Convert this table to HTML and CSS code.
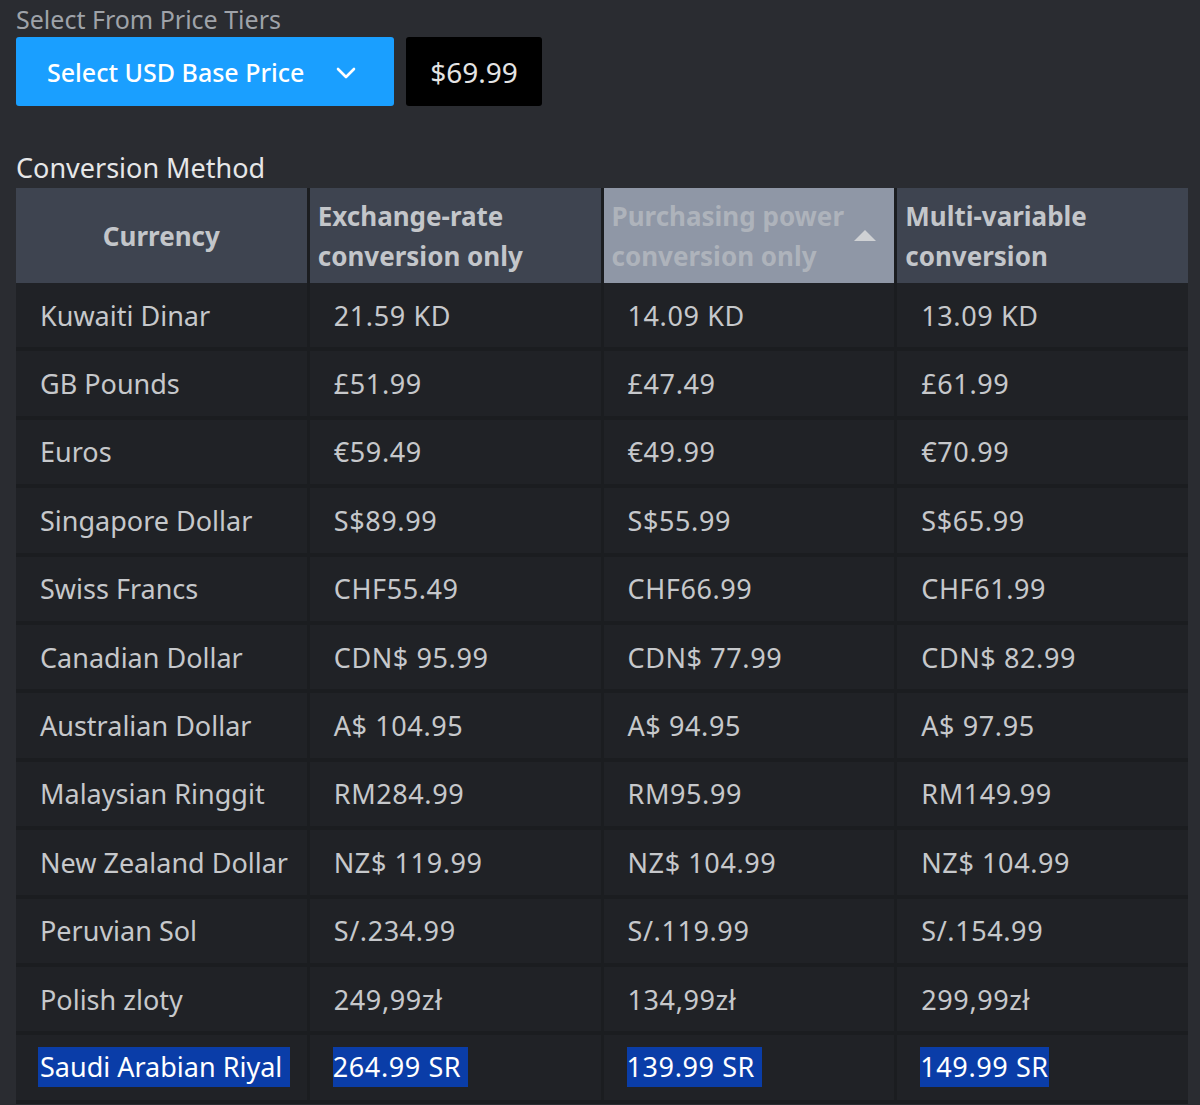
FILE: index.html
```html
<!DOCTYPE html>
<html lang="en">
<head>
<meta charset="utf-8">
<title>Price Tiers</title>
<link rel="stylesheet" href="styles.css">
</head>
<body>
<div class="page">
  <div class="tier-label">Select From Price Tiers</div>
  <div class="tier-row">
    <button class="select-btn">Select USD Base Price
      <svg class="chev" width="20" height="12" viewBox="0 0 20 12"><path d="M2 2 L10 10 L18 2" fill="none" stroke="#fff" stroke-width="2.6" stroke-linecap="round" stroke-linejoin="round"/></svg>
    </button>
    <div class="price-box">$69.99</div>
  </div>
  <div class="method-title">Conversion Method</div>
  <div class="table">
    <div class="th th-center">Currency</div>
    <div class="th">Exchange-rate<br>conversion only</div>
    <div class="th th-sorted">Purchasing power<br>conversion only<span class="tri"></span></div>
    <div class="th">Multi-variable<br>conversion</div>

    <div class="td">Kuwaiti Dinar</div><div class="td val">21.59 KD</div><div class="td val">14.09 KD</div><div class="td val">13.09 KD</div>
    <div class="td">GB Pounds</div><div class="td val">£51.99</div><div class="td val">£47.49</div><div class="td val">£61.99</div>
    <div class="td">Euros</div><div class="td val">€59.49</div><div class="td val">€49.99</div><div class="td val">€70.99</div>
    <div class="td">Singapore Dollar</div><div class="td val">S$89.99</div><div class="td val">S$55.99</div><div class="td val">S$65.99</div>
    <div class="td">Swiss Francs</div><div class="td val">CHF55.49</div><div class="td val">CHF66.99</div><div class="td val">CHF61.99</div>
    <div class="td">Canadian Dollar</div><div class="td val">CDN$ 95.99</div><div class="td val">CDN$ 77.99</div><div class="td val">CDN$ 82.99</div>
    <div class="td">Australian Dollar</div><div class="td val">A$ 104.95</div><div class="td val">A$ 94.95</div><div class="td val">A$ 97.95</div>
    <div class="td">Malaysian Ringgit</div><div class="td val">RM284.99</div><div class="td val">RM95.99</div><div class="td val">RM149.99</div>
    <div class="td">New Zealand Dollar</div><div class="td val">NZ$ 119.99</div><div class="td val">NZ$ 104.99</div><div class="td val">NZ$ 104.99</div>
    <div class="td">Peruvian Sol</div><div class="td val">S/.234.99</div><div class="td val">S/.119.99</div><div class="td val">S/.154.99</div>
    <div class="td">Polish zloty</div><div class="td val">249,99zł</div><div class="td val">134,99zł</div><div class="td val">299,99zł</div>
    <div class="td"><span class="sel sel-wide">Saudi Arabian Riyal</span></div><div class="td val"><span class="sel">264.99 SR</span></div><div class="td val"><span class="sel">139.99 SR</span></div><div class="td val"><span class="sel sel-tight">149.99 SR</span></div>
  </div>
</div>
</body>
</html>
```

FILE: styles.css
```css
html, body {
  margin: 0;
  padding: 0;
  background: #2a2c31;
}
body {
  font-family: "Noto Sans", "Open Sans", sans-serif;
  color: #c6c8cb;
}
.page {
  padding: 4px 12px 0 16px;
}
.tier-label {
  font-size: 25px;
  line-height: 30px;
  color: #9fa3a9;
}
.tier-row {
  display: flex;
  gap: 12px;
  margin-top: 3px;
}
.select-btn {
  width: 378px;
  height: 69px;
  border: none;
  border-radius: 3px;
  background: #1a9fff;
  color: #fff;
  font-family: "Noto Sans", "Open Sans", sans-serif;
  font-size: 25px;
  font-weight: 500;
  display: flex;
  align-items: center;
  padding: 0 0 0 31px;
  gap: 32px;
}
.chev {
  margin-top: 2px;
}
.price-box {
  width: 136px;
  height: 69px;
  border-radius: 3px;
  background: #000;
  color: #e4e4e4;
  font-size: 28px;
  display: flex;
  align-items: center;
  justify-content: center;
}
.method-title {
  margin-top: 44px;
  font-size: 27px;
  line-height: 36px;
  color: #e6e7e8;
}
.table {
  margin-top: 2px;
  display: grid;
  grid-template-columns: repeat(4, minmax(0, 1fr));
  column-gap: 3px;
  background: #1b1d20;
  width: 1172px;
}
.th {
  position: relative;
  height: 95px;
  background: #3e4450;
  color: #c3c6ca;
  font-weight: 700;
  font-size: 26px;
  line-height: 40px;
  padding: 0 8px;
  display: flex;
  align-items: center;
}
.th-center {
  justify-content: center;
}
.th-sorted {
  background: #8f97a6;
  color: #aeb3bb;
}
.tri {
  position: absolute;
  right: 18px;
  top: 42px;
  width: 0;
  height: 0;
  border-left: 11px solid transparent;
  border-right: 11px solid transparent;
  border-bottom: 11px solid #cfd1d4;
}
.td {
  box-sizing: border-box;
  height: 68.4px;
  border-bottom: 4px solid #1b1d20;
  background: #202226;
  font-size: 27px;
  padding: 0 24px;
  display: flex;
  align-items: center;
  white-space: nowrap;
}
.val {
  letter-spacing: 0.6px;
}
.sel {
  background: #0a3da8;
  color: #fff;
  line-height: 40px;
  padding-right: 7px;
  margin-left: -1px;
}
.sel-wide {
  padding-right: 8px;
  margin-left: -2px;
  padding-left: 2px;
}
.sel-tight {
  padding-right: 0;
}
```
